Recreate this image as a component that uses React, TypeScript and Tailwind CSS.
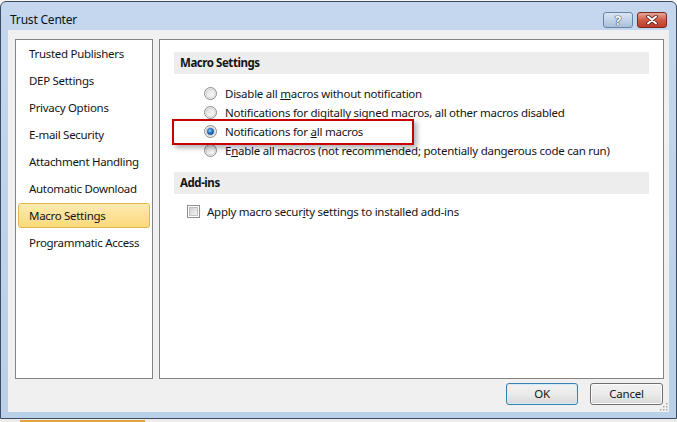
import React from "react";

const FONT = { fontFamily: '"Noto Sans", "Segoe UI", Arial, sans-serif' };

const navItems = [
  "Trusted Publishers",
  "DEP Settings",
  "Privacy Options",
  "E-mail Security",
  "Attachment Handling",
  "Automatic Download",
  "Macro Settings",
  "Programmatic Access",
];

function Radio({ checked }: { checked?: boolean }) {
  return (
    <svg width="13" height="13" viewBox="0 0 13 13" className="shrink-0">
      <defs>
        <linearGradient id="rfill" x1="0" y1="0" x2="1" y2="1">
          <stop offset="0" stopColor="#dcdcdc" />
          <stop offset="1" stopColor="#ffffff" />
        </linearGradient>
        <radialGradient id="rdot" cx="0.4" cy="0.35" r="0.7">
          <stop offset="0" stopColor="#8fd0ff" />
          <stop offset="0.5" stopColor="#2c7fd0" />
          <stop offset="1" stopColor="#0d3f80" />
        </radialGradient>
      </defs>
      <circle cx="6.5" cy="6.5" r="6" fill="#f4f4f4" stroke="#8d8d8d" />
      <circle cx="6.5" cy="6.5" r="4.5" fill="url(#rfill)" stroke="#c9c9c9" strokeWidth="0.8" />
      {checked && <circle cx="6.5" cy="6.5" r="3.2" fill="url(#rdot)" stroke="#1d4f8a" strokeWidth="0.6" />}
    </svg>
  );
}

function Checkbox() {
  return (
    <svg width="13" height="13" viewBox="0 0 13 13" className="shrink-0">
      <defs>
        <linearGradient id="cfill" x1="0" y1="0" x2="1" y2="1">
          <stop offset="0" stopColor="#cfcfcf" />
          <stop offset="1" stopColor="#f6f6f6" />
        </linearGradient>
      </defs>
      <rect x="0.5" y="0.5" width="12" height="12" fill="#ffffff" stroke="#8e8f8f" />
      <rect x="2.5" y="2.5" width="8" height="8" fill="url(#cfill)" stroke="#b4b4b4" strokeWidth="0.8" />
    </svg>
  );
}

function SectionHeader({ children }: { children: React.ReactNode }) {
  return (
    <div className="mx-[14px] h-[22px] bg-[#ededed] flex items-center pl-[6px] text-[11.5px] tracking-[-0.45px] font-bold text-[#141414]">
      {children}
    </div>
  );
}

function RadioRow({ checked, children }: { checked?: boolean; children: React.ReactNode }) {
  return (
    <div className="h-[19px] flex items-center pl-[44px] gap-[8px] text-[11.5px] tracking-[-0.25px] text-[#141414] whitespace-nowrap">
      <Radio checked={checked} />
      <span>{children}</span>
    </div>
  );
}

export default function App() {
  return (
    <div className="w-[677px] h-[422px] flex flex-col bg-white overflow-hidden" style={FONT}>
      {/* desktop strip above the window */}
      <div className="h-[1px] bg-[#f4f4f4]" />

      {/* dialog window */}
      <div className="h-[418px] flex flex-col border border-[#3d4c60] rounded-t-[6px] bg-gradient-to-b from-[#c4d7ee] to-[#b9d0e8]">
        {/* title bar */}
        <div className="h-[28px] flex items-end pb-[2px] pl-[9px] pr-[9px]">
          <span className="h-[16px] leading-[16px] text-[12px] tracking-[-0.2px] text-[#0b1320]">Trust Center</span>
          <div className="ml-auto flex gap-[4px]">
            <div className="w-[30px] h-[16px] rounded-[3px] border border-[#6b84a3] bg-gradient-to-b from-[#d9e6f4] to-[#a9c0db] flex items-center justify-center">
              <span className="text-[13px] font-bold leading-none text-white [text-shadow:0_0_1px_#2b3d55,0_0_1px_#2b3d55,0_0_1px_#2b3d55]">?</span>
            </div>
            <div className="w-[30px] h-[16px] rounded-[3px] border border-[#7a2a22] bg-gradient-to-b from-[#e3a699] via-[#cf5a48] to-[#c13a26] flex items-center justify-center">
              <svg width="12" height="10" viewBox="0 0 12 10">
                <path d="M2 1.5 L10 8.5 M10 1.5 L2 8.5" stroke="#4a1a14" strokeWidth="3.6" strokeLinecap="round" />
                <path d="M2 1.5 L10 8.5 M10 1.5 L2 8.5" stroke="#ffffff" strokeWidth="2" strokeLinecap="round" />
              </svg>
            </div>
          </div>
        </div>

        {/* client area */}
        <div className="relative mx-[7px] h-[382px] bg-[#f0f0f0] flex flex-col">
          <div className="flex pt-[9px] pl-[7px] pr-[5px] gap-[6px]">
            {/* category list */}
            <div className="w-[138px] h-[340px] bg-white border border-[#848484]">
              {navItems.map((item) => {
                const selected = item === "Macro Settings";
                return (
                  <div key={item} className="h-[27px] flex items-center text-[11.5px] tracking-[-0.3px] text-[#141414] whitespace-nowrap">
                    {selected ? (
                      <div className="mx-[2px] w-full h-[25px] rounded-[3px] border border-[#e0b84e] bg-gradient-to-b from-[#fdebb0] to-[#fbd97c] flex items-center pl-[10px]">
                        {item}
                      </div>
                    ) : (
                      <span className="pl-[13px]">{item}</span>
                    )}
                  </div>
                );
              })}
            </div>

            {/* settings pane */}
            <div className="relative w-[505px] h-[340px] bg-white border border-[#848484] pt-[12px]">
              <SectionHeader>Macro Settings</SectionHeader>
              <div className="mt-[10px]">
                <RadioRow>
                  Disable all <u>m</u>acros without notification
                </RadioRow>
                <RadioRow>Notifications for digitally signed macros, all other macros disabled</RadioRow>
                <RadioRow checked>
                  Notifications for <u>a</u>ll macros
                </RadioRow>
                <RadioRow>
                  E<u>n</u>able all macros (not recommended; potentially dangerous code can run)
                </RadioRow>
              </div>

              <div className="mt-[12px]">
                <SectionHeader>Add-ins</SectionHeader>
              </div>
              <div className="mt-[8px] h-[19px] flex items-center pl-[27px] gap-[7px] text-[11.5px] tracking-[-0.25px] text-[#141414] whitespace-nowrap">
                <Checkbox />
                <span>
                  Apply macro secur<u>i</u>ty settings to installed add-ins
                </span>
              </div>

              {/* highlight frame around the selected option */}
              <div className="absolute left-[12px] top-[79px] w-[242px] h-[26px] border-2 border-[#c40000] shadow-[3px_3px_5px_rgba(0,0,0,0.3)]" />
            </div>
          </div>

          {/* dialog buttons */}
          <div className="flex justify-end gap-[12px] pt-[4px] pr-[6px] text-[11.5px] tracking-[-0.2px] text-[#141414]">
            <button className="w-[72px] h-[22px] rounded-[3px] border border-[#3c7fb1] bg-gradient-to-b from-[#f2f2f2] via-[#ebebeb] to-[#d8d8d8] shadow-[inset_0_0_0_1px_#d3ecf8]">
              OK
            </button>
            <button className="w-[73px] h-[22px] rounded-[3px] border border-[#707070] bg-gradient-to-b from-[#f2f2f2] via-[#ebebeb] to-[#d8d8d8] shadow-[inset_0_0_0_1px_#fbfbfb]">
              Cancel
            </button>
          </div>

          {/* size grip */}
          <svg className="absolute right-[1px] bottom-[1px]" width="9" height="9" viewBox="0 0 9 9">
            {[
              [7, 1],
              [4, 4],
              [7, 4],
              [1, 7],
              [4, 7],
              [7, 7],
            ].map(([x, y]) => (
              <rect key={`${x}-${y}`} x={x} y={y} width="1.5" height="1.5" fill="#a8a8a8" />
            ))}
          </svg>
        </div>
      </div>

      {/* desktop strip below the window */}
      <div className="h-[3px] bg-[#ececec] pl-[20px] pt-[1px]">
        <div className="w-[125px] h-[2px] bg-[#e3a33a]" />
      </div>
    </div>
  );
}
